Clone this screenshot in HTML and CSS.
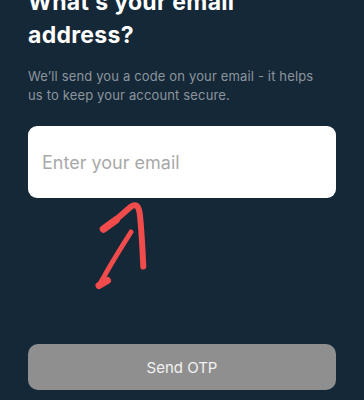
FILE: index.html
```html
<!DOCTYPE html>
<html lang="en">
<head>
<meta charset="utf-8">
<title>Email</title>
<link rel="stylesheet" href="styles.css">
</head>
<body>
<main class="screen">
  <h1 class="title">What’s your email address?</h1>
  <p class="subtitle">We’ll send you a code on your email - it helps us to keep your account secure.</p>
  <div class="field">
    <input class="email" type="email" placeholder="Enter your email">
  </div>
  <div class="annotation">
    <svg class="arrow" width="364" height="146" viewBox="0 199 364 146" aria-hidden="true">
      <path d="M103.5 230 C112 224 123 215 130.5 208 C135.5 204.5 138.5 206 139.8 215 C141.5 230 142.5 250 143.3 267.5" fill="none" stroke="#f24b4b" stroke-width="6" stroke-linecap="round" stroke-linejoin="round"/>
      <path d="M103.5 230 L116 221" fill="none" stroke="#f24b4b" stroke-width="7.5" stroke-linecap="round"/>
      <path d="M131 233 C124 244 114 260 106 274 C103 280 100 284 99 287" fill="none" stroke="#f24b4b" stroke-width="5" stroke-linecap="round"/>
      <path d="M99 286.5 L107.5 281.5" fill="none" stroke="#f24b4b" stroke-width="7" stroke-linecap="round"/>
    </svg>
  </div>
  <button class="send" type="button">Send OTP</button>
</main>
</body>
</html>
```

FILE: styles.css
```css
* { box-sizing: border-box; }
html, body {
  margin: 0;
  padding: 0;
  background: #152838;
}
.screen {
  width: 364px;
  height: 400px;
  overflow: hidden;
  padding: 0 28px;
  display: flex;
  flex-direction: column;
  font-family: "Inter", "Noto Sans", sans-serif;
}
.title {
  margin: -14px 0 0;
  font-size: 23px;
  line-height: 33px;
  font-weight: 700;
  letter-spacing: 0.3px;
  color: #ffffff;
  width: 240px;
}
.subtitle {
  margin: 15px 0 0;
  width: 300px;
  font-size: 13px;
  line-height: 19px;
  letter-spacing: 0.15px;
  color: #8c959d;
}
.field {
  margin-top: 21px;
}
.email {
  display: block;
  width: 308px;
  height: 72px;
  border: none;
  border-radius: 9px;
  background: #ffffff;
  padding: 0 14px;
  font-family: inherit;
  font-size: 18px;
  color: #333;
  outline: none;
}
.email::placeholder {
  color: #a9a9a9;
}
.annotation {
  height: 146px;
  margin: 0 -28px;
}
.arrow {
  display: block;
}
.send {
  width: 308px;
  height: 46px;
  border: none;
  border-radius: 10px;
  background: #8f8f8f;
  color: #f2f2f2;
  font-family: inherit;
  font-size: 15px;
}
```
